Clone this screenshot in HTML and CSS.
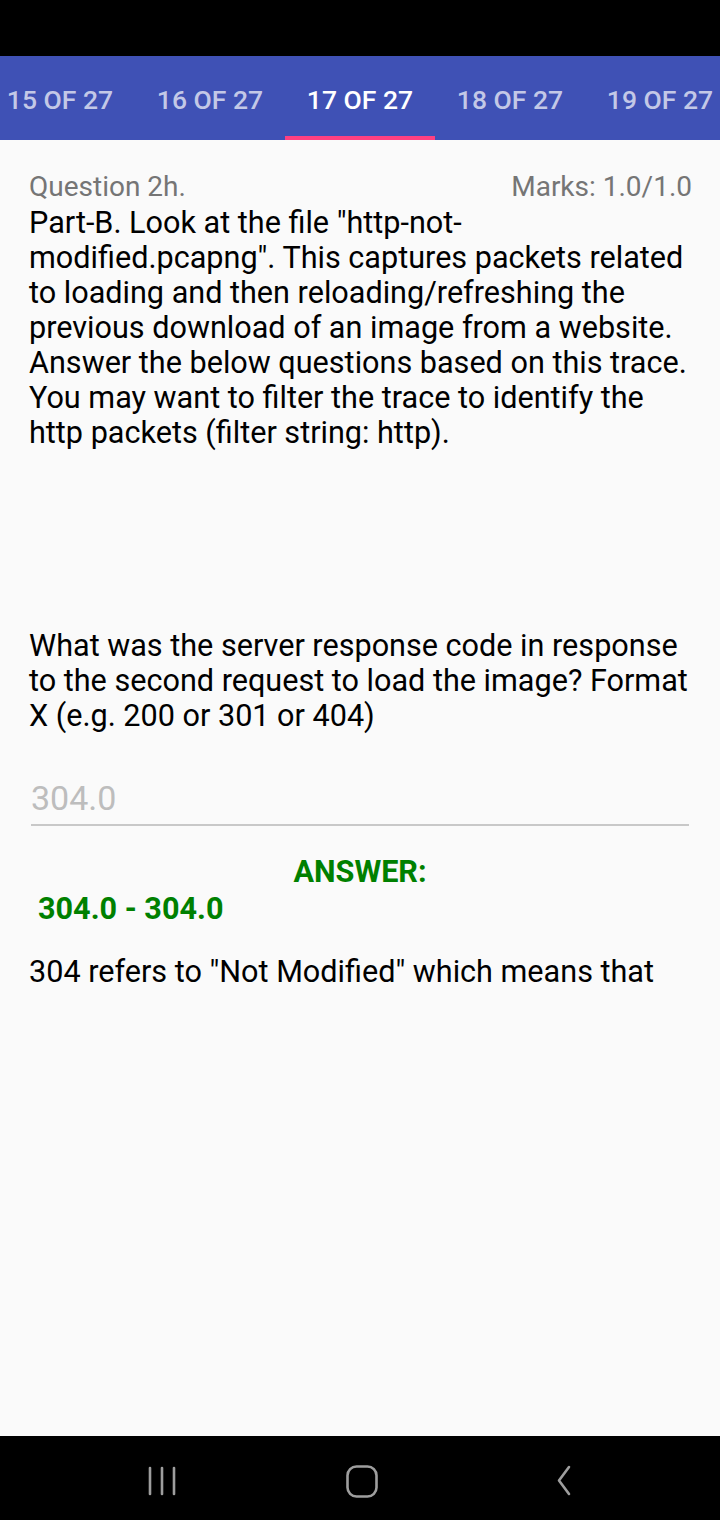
FILE: index.html
```html
<!DOCTYPE html>
<html>
<head>
<meta charset="utf-8">
<link rel="stylesheet" href="styles.css">
</head>
<body>
<div class="screen">
  <div class="statusbar"></div>
  <div class="tabbar">
    <div class="tabs">
      <div class="tab">15 OF 27</div>
      <div class="tab">16 OF 27</div>
      <div class="tab active">17 OF 27</div>
      <div class="tab">18 OF 27</div>
      <div class="tab">19 OF 27</div>
    </div>
  </div>
  <main class="content">
    <div class="qhead">
      <span class="qnum">Question 2h.</span>
      <span class="marks">Marks: 1.0/1.0</span>
    </div>
    <p class="intro">Part-B. Look at the file "http-not-modified.pcapng". This captures packets related to loading and then reloading/refreshing the previous download of an image from a website. Answer the below questions based on this trace. You may want to filter the trace to identify the http packets (filter string: http).</p>
    <p class="question">What was the server response code in response to the second request to load the image? Format X (e.g. 200 or 301 or 404)</p>
    <div class="input">304.0</div>
    <div class="answer-label">ANSWER:</div>
    <div class="answer-value">304.0 - 304.0</div>
    <p class="explain">304 refers to "Not Modified" which means that</p>
  </main>
  <div class="navbar">
    <svg class="nav-icon" width="40" height="40" viewBox="0 0 40 40">
      <g stroke="#9e9e9e" stroke-width="2.6" stroke-linecap="round" fill="none">
        <line x1="8" y1="7" x2="8" y2="33"/>
        <line x1="20" y1="7" x2="20" y2="33"/>
        <line x1="32" y1="7" x2="32" y2="33"/>
      </g>
    </svg>
    <svg class="nav-icon" width="40" height="40" viewBox="0 0 40 40">
      <rect x="5.5" y="5.5" width="29" height="30" rx="9" stroke="#9e9e9e" stroke-width="2.6" fill="none"/>
    </svg>
    <svg class="nav-icon" width="40" height="40" viewBox="0 0 40 40">
      <polyline points="27,6 17,19.5 27,33" stroke="#9e9e9e" stroke-width="2.6" stroke-linecap="round" stroke-linejoin="round" fill="none"/>
    </svg>
  </div>
</div>
</body>
</html>
```

FILE: styles.css
```css
* { box-sizing: border-box; }
html, body { margin: 0; padding: 0; }
body {
  font-family: Roboto, "Liberation Sans", sans-serif;
  background: #000;
}
.screen {
  width: 720px;
  height: 1520px;
  display: flex;
  flex-direction: column;
  background: #fafafa;
  overflow: hidden;
}
.statusbar {
  height: 56px;
  background: #000;
  flex: none;
}
.tabbar {
  height: 84px;
  background: #3f51b5;
  flex: none;
  overflow: hidden;
}
.tabs {
  display: flex;
  margin-left: -15px;
  height: 100%;
}
.tab {
  flex: none;
  width: 150px;
  height: 100%;
  display: flex;
  align-items: center;
  justify-content: center;
  font-size: 26.5px;
  font-weight: 500;
  color: rgba(255,255,255,0.7);
  padding-top: 6px;
  border-bottom: 4px solid transparent;
}
.tab.active {
  color: #fff;
  border-bottom-color: #ff4081;
}
.content {
  flex: 1;
  padding: 32px 29px 0 29px;
}
.qhead {
  display: flex;
  justify-content: space-between;
  align-items: baseline;
  font-size: 28px;
  color: #757575;
  line-height: 30px;
}
.marks { margin-right: -1px; }
.intro, .question, .explain {
  margin: 0;
  font-size: 30.6px;
  line-height: 35px;
  color: #000;
}
.intro { margin-top: 3px; }
.question { margin-top: 178px; }
.input {
  margin: 47px 2px 0 2px;
  font-size: 34px;
  line-height: 36px;
  color: #bdbdbd;
  padding-bottom: 8px;
  border-bottom: 2px solid #c8c8c8;
}
.answer-label {
  margin-top: 28px;
  text-align: center;
  font-size: 30.6px;
  font-weight: 700;
  color: #008000;
  line-height: 36px;
}
.answer-value {
  margin-top: 1px;
  padding-left: 9px;
  font-size: 30.6px;
  font-weight: 700;
  color: #008000;
  line-height: 36px;
}
.explain { margin-top: 27px; }
.navbar {
  height: 84px;
  background: #000;
  flex: none;
  display: flex;
  justify-content: center;
  align-items: center;
  gap: 160px;
  padding-top: 6px;
  padding-left: 3px;
}
.nav-icon { display: block; }
```
